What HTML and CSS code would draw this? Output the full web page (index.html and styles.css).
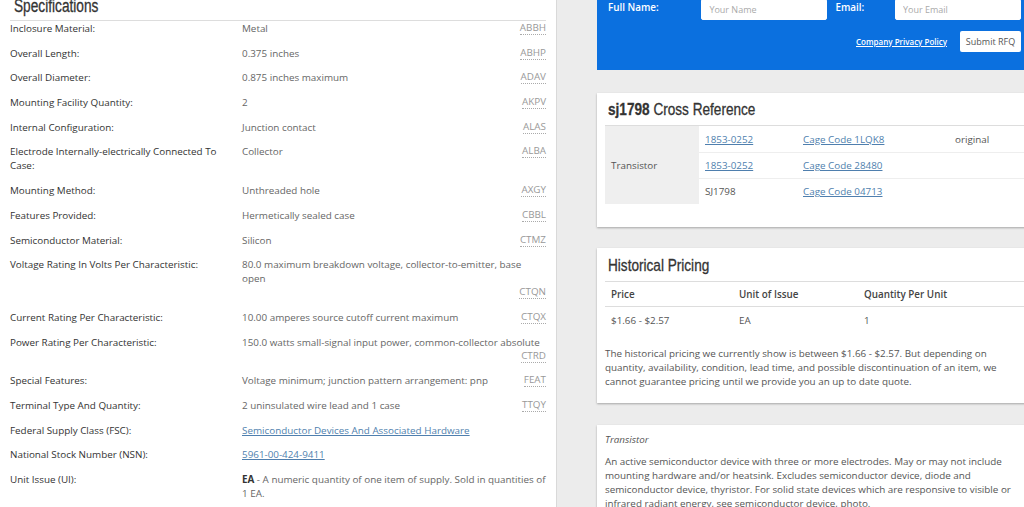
FILE: index.html
```html
<!DOCTYPE html>
<html lang="en">
<head>
    <meta charset="UTF-8">
    <title>SJ1798 Transistor</title>
    <link rel="stylesheet" href="styles.css">
</head>
<body>
    <div class="page">
        <section class="specs">
            <h2 class="specs-title"><span>Specifications</span></h2>
            <div class="spec-list">
                <div class="spec-row">
                    <div class="spec-label">Inclosure Material:</div>
                    <div class="spec-value"><span class="spec-text">Metal</span><abbr class="spec-code">ABBH</abbr></div>
                </div>
                <div class="spec-row">
                    <div class="spec-label">Overall Length:</div>
                    <div class="spec-value"><span class="spec-text">0.375 inches</span><abbr class="spec-code">ABHP</abbr></div>
                </div>
                <div class="spec-row">
                    <div class="spec-label">Overall Diameter:</div>
                    <div class="spec-value"><span class="spec-text">0.875 inches maximum</span><abbr class="spec-code">ADAV</abbr></div>
                </div>
                <div class="spec-row">
                    <div class="spec-label">Mounting Facility Quantity:</div>
                    <div class="spec-value"><span class="spec-text">2</span><abbr class="spec-code">AKPV</abbr></div>
                </div>
                <div class="spec-row">
                    <div class="spec-label">Internal Configuration:</div>
                    <div class="spec-value"><span class="spec-text">Junction contact</span><abbr class="spec-code">ALAS</abbr></div>
                </div>
                <div class="spec-row">
                    <div class="spec-label">Electrode Internally-electrically Connected To Case:</div>
                    <div class="spec-value"><span class="spec-text">Collector</span><abbr class="spec-code">ALBA</abbr></div>
                </div>
                <div class="spec-row">
                    <div class="spec-label">Mounting Method:</div>
                    <div class="spec-value"><span class="spec-text">Unthreaded hole</span><abbr class="spec-code">AXGY</abbr></div>
                </div>
                <div class="spec-row">
                    <div class="spec-label">Features Provided:</div>
                    <div class="spec-value"><span class="spec-text">Hermetically sealed case</span><abbr class="spec-code">CBBL</abbr></div>
                </div>
                <div class="spec-row">
                    <div class="spec-label">Semiconductor Material:</div>
                    <div class="spec-value"><span class="spec-text">Silicon</span><abbr class="spec-code">CTMZ</abbr></div>
                </div>
                <div class="spec-row">
                    <div class="spec-label">Voltage Rating In Volts Per Characteristic:</div>
                    <div class="spec-value"><span class="spec-text">80.0 maximum breakdown voltage, collector-to-emitter, base open</span><abbr class="spec-code">CTQN</abbr></div>
                </div>
                <div class="spec-row">
                    <div class="spec-label">Current Rating Per Characteristic:</div>
                    <div class="spec-value"><span class="spec-text">10.00 amperes source cutoff current maximum</span><abbr class="spec-code">CTQX</abbr></div>
                </div>
                <div class="spec-row">
                    <div class="spec-label">Power Rating Per Characteristic:</div>
                    <div class="spec-value"><span class="spec-text">150.0 watts small-signal input power, common-collector absolute</span><abbr class="spec-code">CTRD</abbr></div>
                </div>
                <div class="spec-row">
                    <div class="spec-label">Special Features:</div>
                    <div class="spec-value"><span class="spec-text">Voltage minimum; junction pattern arrangement: pnp</span><abbr class="spec-code">FEAT</abbr></div>
                </div>
                <div class="spec-row">
                    <div class="spec-label">Terminal Type And Quantity:</div>
                    <div class="spec-value"><span class="spec-text">2 uninsulated wire lead and 1 case</span><abbr class="spec-code">TTQY</abbr></div>
                </div>
                <div class="spec-row">
                    <div class="spec-label">Federal Supply Class (FSC):</div>
                    <div class="spec-value"><a href="#">Semiconductor Devices And Associated Hardware</a></div>
                </div>
                <div class="spec-row">
                    <div class="spec-label">National Stock Number (NSN):</div>
                    <div class="spec-value"><a href="#">5961-00-424-9411</a></div>
                </div>
                <div class="spec-row">
                    <div class="spec-label">Unit Issue (UI):</div>
                    <div class="spec-value"><p class="spec-text"><b>EA</b> - A numeric quantity of one item of supply. Sold in quantities of 1 EA.</p></div>
                </div>
            </div>
        </section>

        <aside class="side">
            <form class="rfq">
                <div class="rfq-fields">
                    <label class="rfq-label rfq-label-name">Full Name:</label>
                    <input class="rfq-input" type="text" placeholder="Your Name">
                    <label class="rfq-label rfq-label-email">Email:</label>
                    <input class="rfq-input" type="text" placeholder="Your Email">
                </div>
                <div class="rfq-actions">
                    <a class="rfq-policy" href="#">Company Privacy Policy</a>
                    <button class="rfq-submit" type="button">Submit RFQ</button>
                </div>
            </form>

            <div class="card card-xref">
                <h2 class="card-title"><span><b>sj1798</b> Cross Reference</span></h2>
                <table class="xref">
                    <tr>
                        <td class="xref-type" rowspan="3">Transistor</td>
                        <td class="xref-part"><a href="#">1853-0252</a></td>
                        <td class="xref-cage"><a href="#">Cage Code 1LQK8</a></td>
                        <td>original</td>
                    </tr>
                    <tr>
                        <td class="xref-part"><a href="#">1853-0252</a></td>
                        <td class="xref-cage"><a href="#">Cage Code 28480</a></td>
                        <td></td>
                    </tr>
                    <tr>
                        <td class="xref-part">SJ1798</td>
                        <td class="xref-cage"><a href="#">Cage Code 04713</a></td>
                        <td></td>
                    </tr>
                </table>
            </div>

            <div class="card card-pricing">
                <h2 class="card-title"><span>Historical Pricing</span></h2>
                <table class="pricing">
                    <tr>
                        <th class="pricing-price">Price</th>
                        <th class="pricing-unit">Unit of Issue</th>
                        <th>Quantity Per Unit</th>
                    </tr>
                    <tr>
                        <td>$1.66 - $2.57</td>
                        <td>EA</td>
                        <td>1</td>
                    </tr>
                </table>
                <p class="card-text">The historical pricing we currently show is between $1.66 - $2.57. But depending on quantity, availability, condition, lead time, and possible discontinuation of an item, we cannot guarantee pricing until we provide you an up to date quote.</p>
            </div>

            <div class="card card-desc">
                <p class="desc-name">Transistor</p>
                <p class="card-text">An active semiconductor device with three or more electrodes. May or may not include mounting hardware and/or heatsink. Excludes semiconductor device, diode and semiconductor device, thyristor. For solid state devices which are responsive to visible or infrared radiant energy, see semiconductor device, photo.</p>
            </div>
        </aside>
    </div>
</body>
</html>
```

FILE: styles.css
```css
*{
    margin: 0;
    padding: 0;
    box-sizing: border-box;
}
html, body{
    height: 100%;
    overflow: hidden;
}
body{
    background: #ececec;
    font-family: "Open Sans", "Liberation Sans", sans-serif;
    font-size: 9.85px;
    line-height: 14px;
    color: #555;
}
a{
    color: #4f7fae;
    text-decoration: underline;
}
.page{
    display: flex;
    align-items: flex-start;
    gap: 40px;
    width: 1040px;
}

/* condensed headings */
.specs-title,
.card-title{
    border-bottom: 1px solid #ddd;
    font-family: "Liberation Sans", Arial, sans-serif;
    font-weight: normal;
    font-size: 17px;
    color: #333;
    white-space: nowrap;
    -webkit-text-stroke: 0.3px #333;
}
.specs-title span,
.card-title span{
    display: inline-block;
    transform: scaleX(0.8);
    transform-origin: left center;
}
.card-title b{
    font-weight: bold;
}

/* specifications */
.specs{
    width: 557px;
    min-height: 520px;
    background: #fff;
    border-right: 1px solid #d9d9d9;
    padding: 0 10px;
}
.specs-title{
    margin-top: -7px;
    padding: 0 4px;
    font-size: 18px;
    line-height: 27px;
}
.specs-title span{
    transform: scaleX(0.76);
}
.spec-list{
    display: flex;
    flex-direction: column;
    gap: 10.7px;
}
.spec-row{
    display: flex;
    align-items: flex-start;
}
.spec-label{
    width: 232px;
    padding-right: 10px;
    color: #333;
}
.spec-value{
    flex: 1;
    display: flex;
    flex-wrap: wrap;
    align-items: flex-start;
    column-gap: 10px;
    color: #666;
}
.spec-value b{
    color: #333;
}
.spec-text{
    flex: 0 1 auto;
}
.spec-code{
    margin-left: auto;
    color: #999;
    text-decoration: none;
    border-bottom: 1px dotted #aaa;
    line-height: 13px;
}

/* right column */
.side{
    width: 437px;
    flex-shrink: 0;
}
.rfq{
    margin-top: -11px;
    background: #0b70df;
    padding: 10px 13px 18px 11px;
}
.rfq-fields{
    display: flex;
    align-items: flex-start;
}
.rfq-label{
    color: #fff;
    font-weight: 600;
    line-height: 16px;
}
.rfq-label-name{
    width: 94px;
}
.rfq-label-email{
    width: 68px;
    padding-left: 8px;
}
.rfq-input{
    width: 126px;
    height: 21px;
    border: 1px solid #fff;
    border-radius: 2px;
    padding: 0 7px;
    font-family: inherit;
    font-size: 9px;
    color: #555;
    background: #fff;
}
.rfq-input::placeholder{
    color: #aaa;
}
.rfq-actions{
    display: flex;
    justify-content: flex-end;
    align-items: center;
    gap: 13px;
    margin-top: 11px;
}
.rfq-policy{
    color: #fff;
    font-size: 8px;
    font-weight: 600;
}
.rfq-submit{
    width: 61px;
    height: 21px;
    border: none;
    border-radius: 2px;
    background: #fff;
    font-family: inherit;
    font-size: 9px;
    color: #555;
}

/* cards */
.card{
    background: #fff;
    margin-top: 23px;
    padding: 5px 8px 22px;
    box-shadow: 0 1px 2px rgba(0, 0, 0, 0.3);
}
.card-title{
    padding: 0 3px 2px;
    line-height: 26px;
}
.card-xref{
    padding-top: 4px;
    padding-bottom: 23px;
}
.xref{
    width: 100%;
    border-collapse: collapse;
}
.xref td{
    height: 26px;
    padding: 0 6px;
    border-bottom: 1px solid #eee;
    vertical-align: middle;
}
.xref tr:last-child td{
    border-bottom: none;
}
.xref .xref-type{
    width: 94px;
    background: #efefef;
    border-bottom: none;
}
.xref-part{
    width: 98px;
}
.xref-cage{
    width: 152px;
}
.card-pricing{
    margin-top: 21px;
    padding-bottom: 15px;
}
.pricing{
    width: 100%;
    border-collapse: collapse;
}
.pricing th,
.pricing td{
    height: 27px;
    padding: 0 6px;
    text-align: left;
    vertical-align: middle;
}
.pricing th{
    height: 24px;
    font-weight: 600;
    color: #444;
    border-bottom: 1px solid #ddd;
}
.pricing-price{
    width: 128px;
}
.pricing-unit{
    width: 125px;
}
.card-text{
    margin-top: 13px;
    padding-right: 4px;
}
.card-desc{
    margin-top: 22px;
    padding-top: 7px;
}
.desc-name{
    font-style: italic;
}
.card-desc .card-text{
    margin-top: 7.5px;
}
```
